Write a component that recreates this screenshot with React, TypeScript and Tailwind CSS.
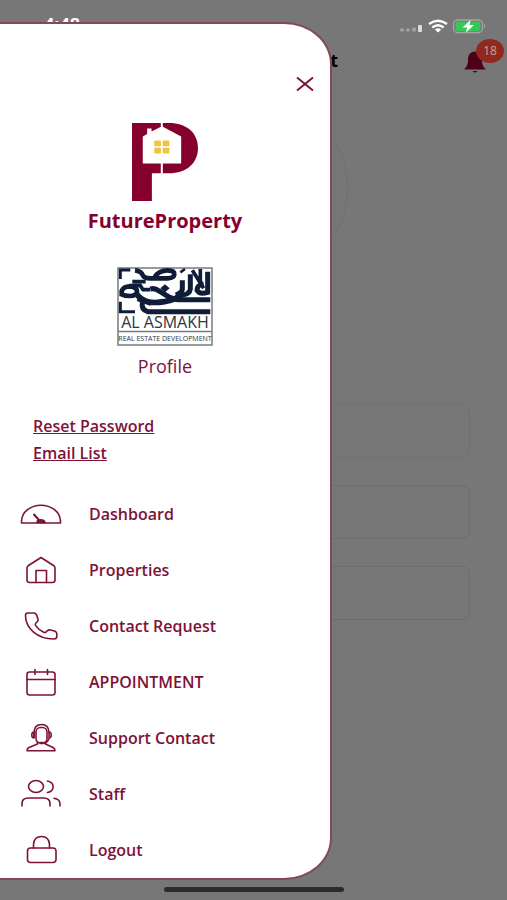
import type { ReactNode } from 'react'

interface MenuEntry {
  label: string
  icon: ReactNode
}

// All menu icons share one 44x40 box and the same thin stroke
function MenuIcon({ children }: { children: ReactNode }) {
  return (
    <svg
      viewBox="0 0 44 40"
      className="h-10 w-11 shrink-0"
      fill="none"
      stroke="currentColor"
      strokeWidth="1.6"
      strokeLinecap="round"
      strokeLinejoin="round"
      aria-hidden="true"
    >
      {children}
    </svg>
  )
}

const MENU: MenuEntry[] = [
  {
    label: 'Dashboard',
    icon: (
      <MenuIcon>
        <path d="M2.5 29V27C3 18 11.5 11.2 22 11.200S41 18 41.5 27V29Z" />
        <path d="M15 20.500 21 27" strokeWidth="2" />
        <path d="M18 28.500c0-3.500 7-3.500 8 0Z" fill="currentColor" />
      </MenuIcon>
    ),
  },
  {
    label: 'Properties',
    icon: (
      <MenuIcon>
        <path d="M8 18Q8 16.500 9.500 15.500L22 7.500l12.500 8Q36 16.500 36 18V30Q36 32.500 33.500 32.500h-23Q8 32.500 8 30Z" />
        <path d="M17 32.500V20.500h10.500V32.500" />
      </MenuIcon>
    ),
  },
  {
    label: 'Contact Request',
    icon: (
      <MenuIcon>
        <path d="M9 7h5.500q2.500 0 3.300 2.500l1.200 3.500q.5 1.700-1 3l-1.300 1.300q-.8 1.200 0 2.300 3 4.500 8 6.700 1.400.6 2.500-.4l1-1.100q1.500-1.300 3.300-.8l3.800 1q2.500.8 2.500 3v2.500q0 2.500-3 2.500C18.500 33 6.500 22.500 6.500 9.500q0-2.500 2.500-2.500Z" />
      </MenuIcon>
    ),
  },
  {
    label: 'APPOINTMENT',
    icon: (
      <MenuIcon>
        <rect x="8" y="10" width="28" height="23" rx="2.500" />
        <path d="M8 17.500h28M16 7.500v5M28.500 7.500v5" />
      </MenuIcon>
    ),
  },
  {
    label: 'Support Contact',
    icon: (
      <MenuIcon>
        <rect x="17" y="9.500" width="11" height="15.500" rx="4.500" />
        <path d="M15 19v-5Q15.500 6.500 22.500 6.500t7.500 7.500v5" />
        <path d="M15 14q-2.200 0-2.200 3t2.200 3ZM30 14q2.200 0 2.200 3T30 20q-.5 4-5 5.500" />
        <path d="M18.500 24v2L10 29.500q-2 1-2 3.200h28q0-2.200-2-3.200L26.500 26v-2" />
        <path d="M21.500 25h2" strokeWidth="2.500" />
      </MenuIcon>
    ),
  },
  {
    label: 'Staff',
    icon: (
      <MenuIcon>
        <ellipse cx="17" cy="12.500" rx="7.500" ry="6" />
        <path d="M28.500 7c7.500 1.500 7.500 10 0 11.500" />
        <path d="M3 32v-2.500q0-5.500 6.500-5.500h15q6.500 0 6.500 5.500v2.500M35 24.200q6 1 6 5.500v2.300" />
      </MenuIcon>
    ),
  },
  {
    label: 'Logout',
    icon: (
      <MenuIcon>
        <rect x="8.500" y="18" width="28.500" height="14.500" rx="3" />
        <path d="M14.500 18V14.500q.5-8 8-8t8 8V18" />
      </MenuIcon>
    ),
  },
]

function StatusIcons() {
  return (
    <svg viewBox="0 0 88 16" className="h-4 w-[88px]" aria-hidden="true">
      <g fill="#a0a0a0">
        <rect x="1" y="10.500" width="4" height="3" rx="1" />
        <rect x="7" y="10.500" width="4" height="3" rx="1" />
        <rect x="13" y="9.500" width="4" height="4" rx="1" />
        <rect x="19" y="7" width="4" height="7" rx="1" fill="#dcdcdc" />
      </g>
      <g fill="none" stroke="#fff" strokeWidth="2.400">
        <path d="M30 6Q39 -.500 48 6" />
        <path d="M33.300 9.500Q39 5 44.700 9.500" />
      </g>
      <path d="M39 14.500 35.800 11.500Q39 9.200 42.200 11.500Z" fill="#fff" />
      <rect x="54.500" y="2" width="29" height="12.500" rx="4" fill="none" stroke="#a6a6a6" strokeWidth="1.300" />
      <rect x="56.500" y="3.500" width="25" height="9.500" rx="2.500" fill="#35c759" />
      <path d="M85 6q2.500 2.200 0 4.500Z" fill="#a6a6a6" />
      <path d="m71.500 2-8 7.500h4.500l-1 5 8-7.500h-4.500Z" fill="#fff" />
    </svg>
  )
}

function PropertyLogo() {
  return (
    <svg viewBox="160 42 196 231" className="h-[78px] w-[66px]" role="img" aria-label="FutureProperty logo">
      <path d="M160 42h110c52 0 86 29 86 74s-34 75-86 75h-51v82h-59Z" fill="#86002f" />
      <path d="M192 162V82l13-8V58h13v9l31-16 57 31v80Z" fill="#fff" />
      <path d="M248.500 42v18M248.500 160v32" stroke="#fff" strokeWidth="6" />
      <g fill="#edc444">
        <rect x="226" y="94" width="20" height="17" rx="3" />
        <rect x="251" y="94" width="20" height="17" rx="3" />
        <rect x="226" y="115" width="20" height="17" rx="3" />
        <rect x="251" y="115" width="20" height="17" rx="3" />
      </g>
    </svg>
  )
}

function AsmakhLogo() {
  return (
    <svg viewBox="0 0 96 79" className="h-[79px] w-24" role="img" aria-label="Al Asmakh Real Estate Development">
      <rect x="1" y="1" width="94" height="77" fill="#fff" stroke="#777b7f" strokeWidth="1.500" />
      {/* Calligraphy, drawn at three times the size */}
      <g transform="translate(-4 -4) scale(.3333)" fill="none" stroke="#101d38" strokeWidth="12">
        <path d="M22 48V21H52M22 116v30h44" strokeWidth="9" />
        <path d="M66 22q20 2 24 16 4 8 22 8h52q20-1 20-12 0-12-20-12-28 0-40 22" strokeWidth="14" />
        <path d="M58 56h40M48 68h34l8 12h22" strokeWidth="11" />
        <path d="M26 100V84q6-14 24-14 22 2 22 16-2 13-22 13-14 0-24-5" strokeWidth="14" />
        <path d="M70 92q12 18 34 24 20 5 50 0 42-8 58-26M74 106l40 14" strokeWidth="17" />
        <path d="M112 78q14-4 26 6l30 18q18 10 46 8h78" strokeWidth="15" />
        <path d="M88 118q-4 22 16 28h188" strokeWidth="15" />
        <path d="M208 52v28q-4 12-20 16M232 34v44q-2 16-24 18M284 26v62q-24 8-32-6 0-16 20-20" strokeWidth="15" />
        <path d="M238 22 272 76M262 18v50" strokeWidth="11" />
        <path d="m202 28 14-10" strokeWidth="8" />
        <path d="m156 64 14 12-14 12-14-12Z" fill="#101d38" stroke="none" />
      </g>
      <path d="M1 64.500h94" stroke="#777b7f" strokeWidth="1.500" />
      <text x="48" y="61" textAnchor="middle" fontSize="16" fontFamily="Open Sans, sans-serif" fill="#2e3440">AL ASMAKH</text>
      <text x="48" y="74" textAnchor="middle" fontSize="7" fontFamily="Open Sans, sans-serif" fill="#2e3440">REAL ESTATE DEVELOPMENT</text>
    </svg>
  )
}

// The dimmed screen that stays behind the drawer
function Backdrop() {
  return (
    <div className="col-start-1 row-start-1 flex min-w-0 flex-col bg-[#777777]">
      <div className="flex items-end justify-between pt-[14px] pr-5 pl-11">
        <span className="text-lg leading-5 font-bold text-white">4:48</span>
        <StatusIcons />
      </div>
      <header className="grid grid-cols-3 items-start pt-3">
        <h1 className="col-start-2 text-right text-lg leading-7 font-bold text-black">Agent</h1>
        <button type="button" className="relative mr-2 h-8 w-9 justify-self-end" aria-label="18 notifications">
          <svg viewBox="0 0 24 24" className="h-6 w-6" fill="#500018" aria-hidden="true">
            <path d="M12 1.500c5 0 7 4 7 8 0 5 1 7 4 10H1c3-3 4-5 4-10 0-4 2-8 7-8ZM9.500 21h5q-2.500 3-5 0Z" />
          </svg>
          <span className="absolute -top-[7px] -right-[5px] flex h-6 w-7 items-center justify-center rounded-[50%] bg-[#91291f] text-xs text-[#c3a5a1]">
            18
          </span>
        </button>
      </header>
      <div className="mx-auto mt-4 size-[188px] rounded-full border border-[#6e7272]" />
      <div className="mt-[122px] flex flex-col gap-[27px] px-[37px]">
        <div className="h-[54px] rounded-lg border border-[#717171]" />
        <div className="h-[54px] rounded-lg border border-[#6d6d6d]" />
        <div className="h-[54px] rounded-lg border border-[#6d6d6d]" />
      </div>
      <div className="mx-auto mt-auto mb-2 h-[5px] w-[180px] rounded-full bg-[#2c2c2c]" />
    </div>
  )
}

function Drawer() {
  return (
    <aside className="z-10 col-start-1 row-start-1 mt-[22px] mb-5 flex w-[332px] max-w-full flex-col rounded-[0_48px_48px_0/0_42px_42px_0] border-2 border-l-0 border-[#83495a] bg-white text-[#7d1238]">
      <button type="button" aria-label="Close menu" className="mt-12 mr-3 self-end p-1">
        <svg viewBox="0 0 18 16" className="h-4 w-[18px]" fill="none" stroke="currentColor" strokeWidth="2" aria-hidden="true">
          <path d="M1 1.500 17 14.500M17 1.500 1 14.500" />
        </svg>
      </button>
      <div className="flex flex-col items-center pt-[27px]">
        <PropertyLogo />
        <p className="mt-2 text-xl leading-6 font-bold text-[#86002f]">FutureProperty</p>
        <div className="mt-[34px]">
          <AsmakhLogo />
        </div>
        <p className="mt-2 text-lg leading-6">Profile</p>
      </div>
      <div className="mt-9 flex flex-col items-start gap-[3px] pl-[33px] text-base leading-6 font-semibold">
        <a href="#reset" className="underline decoration-1">Reset Password</a>
        <a href="#emails" className="underline decoration-1">Email List</a>
      </div>
      <nav className="mt-[21px] pl-[19px]">
        <ul>
          {MENU.map((entry) => (
            <li key={entry.label}>
              <a href="#menu" className="flex h-14 items-center gap-[26px] text-base font-semibold">
                {entry.icon}
                {entry.label}
              </a>
            </li>
          ))}
        </ul>
      </nav>
    </aside>
  )
}

export default function App() {
  return (
    <main className="grid min-h-screen grid-cols-1 font-['Open_Sans',sans-serif]">
      <Backdrop />
      <Drawer />
    </main>
  )
}
